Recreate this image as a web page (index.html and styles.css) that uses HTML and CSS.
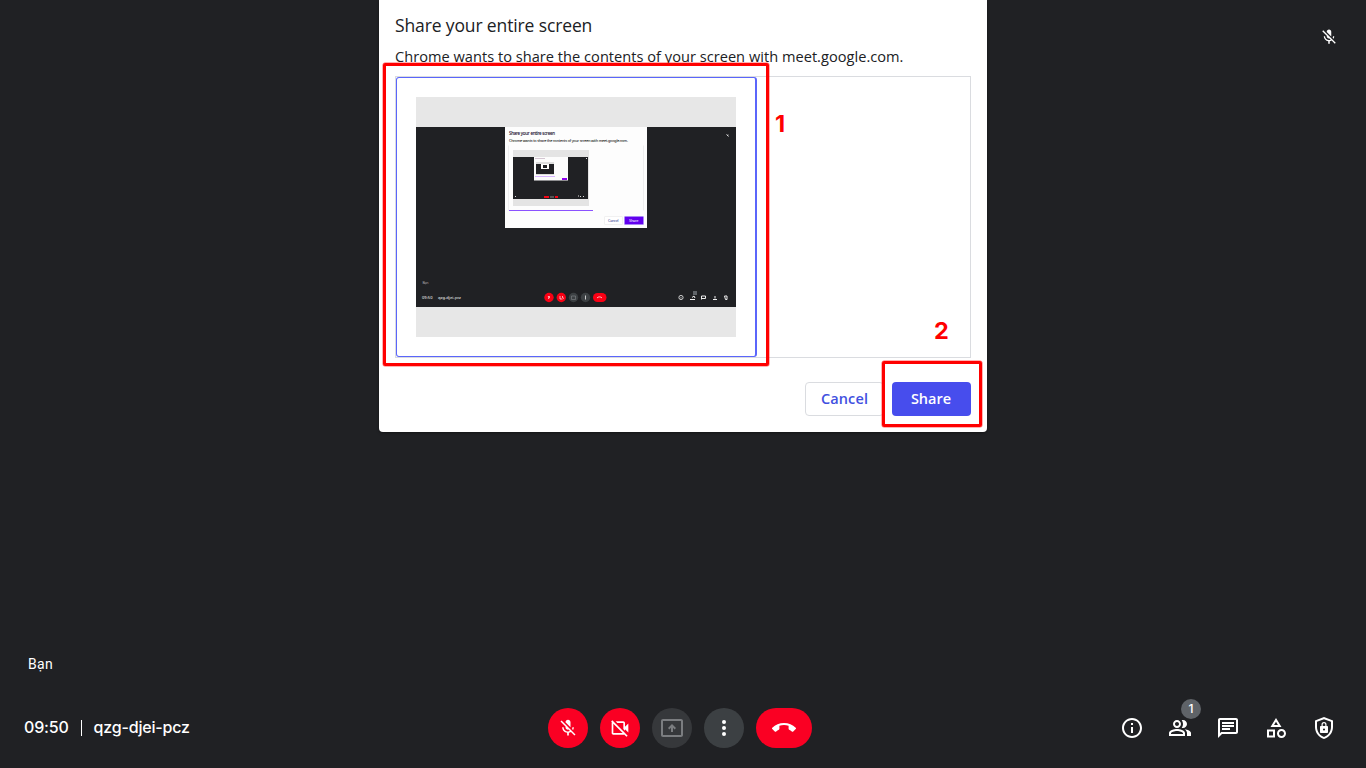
FILE: index.html
```html
<!DOCTYPE html>
<html lang="vi">
<head>
<meta charset="utf-8">
<title>Meet</title>
<link rel="stylesheet" href="styles.css">
</head>
<body>
<div class="meet">
  <svg class="tile-mic" viewBox="0 0 24 24"><path d="M19 11h-1.7c0 .74-.16 1.43-.43 2.05l1.23 1.23c.56-.98.9-2.09.9-3.28zm-4.02.17c0-.06.02-.11.02-.17V5c0-1.66-1.34-3-3-3S9 3.34 9 5v.18l5.98 5.99zM4.27 3L3 4.27l6.01 6.01V11c0 1.66 1.33 3 2.99 3 .22 0 .44-.03.65-.08l1.66 1.66c-.71.33-1.5.52-2.31.52-2.76 0-5.3-2.1-5.3-5.1H5c0 3.41 2.72 6.23 6 6.72V21h2v-3.28c.91-.13 1.77-.45 2.54-.9L19.73 21 21 19.73 4.27 3z"/></svg>

  <section class="dialog">
    <h1 class="title">Share your entire screen</h1>
    <p class="subtitle">Chrome wants to share the contents of your screen with meet.google.com.</p>
    <div class="sources">
      <div class="source">
        <svg class="thumb" viewBox="0 0 320 240">
          <rect width="320" height="240" fill="#e7e7e7"/>
          <rect y="30" width="320" height="180" fill="#202124"/>
          <rect x="89" y="30" width="142" height="101" fill="#fdfdfd"/>
          <text x="93" y="37.500" font-size="4.500" textLength="46" fill="#201030" stroke="#201030" stroke-width=".1">Share your entire screen</text>
          <text x="93" y="45" font-size="3.800" textLength="119" fill="#222" stroke="#222" stroke-width=".05">Chrome wants to share the contents of your screen with meet.google.com.</text>
          <path d="M92.500 48.500v65M227.500 48.500v65" fill="none" stroke="#eeeeef"/>
          <rect x="97" y="53" width="76" height="56" fill="#e4e4e4"/>
          <rect x="97" y="60" width="75" height="42" fill="#202124"/>
          <rect x="118" y="60" width="34" height="23.500" fill="#fcfcfc"/>
          <path d="M119 61.500h10" stroke="#c9b8c6" stroke-width=".8"/>
          <rect x="120" y="65" width="18" height="13" fill="#dedede"/>
          <rect x="120" y="67" width="18" height="10" fill="#202124"/>
          <rect x="125" y="67" width="8" height="5" fill="#fff"/>
          <rect x="127" y="68" width="4" height="3" fill="#202124"/>
          <rect x="119" y="79" width="20" height="1" fill="#d7b5ff"/>
          <rect x="146" y="81" width="5" height="2" fill="#9000f0"/>
          <path d="M128 100h5m6 0h3" stroke="#f20818" stroke-width="2"/>
          <path d="M134 100h4" stroke="#555" stroke-width="2"/>
          <path d="M99 99.500h1m62-.5h1m1 .5h1m2 0h1M170 61.500h1" stroke="#ddd"/>
          <rect x="93" y="113" width="84" height="1" fill="#8b52ff"/>
          <rect x="188.500" y="119.500" width="18" height="8" rx=".5" fill="#fff" stroke="#f1f1f1"/>
          <rect x="208.500" y="119.500" width="19" height="8" rx=".5" fill="#6200ee" stroke="#a58af8" stroke-width=".6"/>
          <text x="192" y="125" font-size="3.800" textLength="10.500" fill="#2a3590">Cancel</text>
          <text x="213" y="125" font-size="3.800" textLength="9.500" fill="#fff">Share</text>
          <path d="M310.500 37.500l2 2m-.5-2v1" stroke="#ddd"/>
          <text x="6.500" y="187" font-size="3.600" textLength="6" fill="#aaa">Bạn</text>
          <text x="6" y="202" font-size="4" textLength="10.500" fill="#fff">09:50</text>
          <text x="22" y="202" font-size="4" textLength="23" fill="#fff">qzg-djei-pcz</text>
          <circle cx="133" cy="200.500" r="4.700" fill="#fa0014"/><circle cx="145.300" cy="200.500" r="4.700" fill="#fa0014"/>
          <circle cx="157.500" cy="200.500" r="4.700" fill="#3c4043"/><circle cx="169.500" cy="200.500" r="4.700" fill="#3c4043"/>
          <rect x="177" y="196" width="13.500" height="9" rx="4.500" fill="#fa0014"/>
          <path d="M132 199l1.500 2m0-2l-1 3M144 199v3h2.500m0-3v1.500l1.500 1M181 201c1-1.500 4-1.500 5 0" fill="none" stroke="#fff" stroke-width=".7"/>
          <path d="M155.500 199h4v3.500h-4z" fill="none" stroke="#85878a" stroke-width=".6"/>
          <path d="M169.500 198.500v4" stroke="#ddd" stroke-width=".9"/>
          <circle cx="265" cy="200.500" r="2.100" fill="none" stroke="#ddd" stroke-width=".9"/><path d="M265 200v1.500" stroke="#ddd" stroke-width=".7"/>
          <rect x="277" y="194" width="4" height="4" fill="#5f6368"/>
          <path d="M274 202.500h5M276 200.500l2-1.500 1 2M285.500 202.500v-3.500h4v2.500h-3.500M297 202.500h4m-2-3.500v2.500M308.500 199h2.500v3.500h-1.500z" fill="none" stroke="#eee" stroke-width="1"/>
        </svg>
      </div>
    </div>
    <div class="actions">
      <button class="btn cancel">Cancel</button>
      <button class="btn share">Share</button>
    </div>
    <div class="mark mark-source"></div>
    <div class="mark mark-share"></div>
    <span class="number one">1</span>
    <span class="number two">2</span>
  </section>

  <div class="name">Bạn</div>

  <footer class="bar">
    <div class="info"><span class="time">09:50</span><span class="sep"></span><span class="code">qzg-djei-pcz</span></div>
    <div class="controls">
      <span class="ctl red"><svg class="i20" viewBox="0 0 24 24"><path d="M19 11h-1.700c0 .74-.16 1.430-.43 2.050l1.230 1.230c.56-.98.9-2.090.9-3.280zm-4.020.17c0-.06.02-.11.02-.17V5c0-1.660-1.340-3-3-3S9 3.340 9 5v.18l5.980 5.990zM4.270 3L3 4.270l6.010 6.010V11c0 1.660 1.330 3 2.990 3 .22 0 .44-.03.65-.08l1.660 1.660c-.71.33-1.500.52-2.310.52-2.760 0-5.300-2.100-5.300-5.100H5c0 3.410 2.720 6.230 6 6.720V21h2v-3.280c.91-.13 1.770-.45 2.540-.9L19.730 21 21 19.730 4.270 3z"/></svg></span>
      <span class="ctl red"><svg class="i20" viewBox="0 0 24 24"><path d="M18 10.480V6c0-1.100-.9-2-2-2H6.830l2 2H16v7.170l2 2v-1.650l4 3.980v-11l-4 3.980zM16 16L6 6 4 4 2.810 2.810 1.390 4.220l.85.85C2.090 5.350 2 5.660 2 6v12c0 1.100.9 2 2 2h12c.34 0 .65-.09.93-.24l2.850 2.850 1.410-1.410L18 18l-2-2zM4 18V6.830L15.170 18H4z"/></svg></span>
      <span class="ctl dim"><svg class="i24" viewBox="0 0 24 24"><path d="M21 3H3c-1.110 0-2 .89-2 2v14c0 1.110.89 2 2 2h18c1.110 0 2-.89 2-2V5c0-1.110-.89-2-2-2zm0 16H3V5h18v14zM11 16v-4.200l-1.600 1.600L8 12l4-4 4 4-1.400 1.400-1.600-1.600V16z"/></svg></span>
      <span class="ctl gray"><svg class="i24" viewBox="0 0 24 24"><circle cx="12" cy="6" r="2"/><circle cx="12" cy="12" r="2"/><circle cx="12" cy="18" r="2"/></svg></span>
      <span class="ctl red end"><svg class="i24" viewBox="0 0 24 24"><path d="M12 9c-1.600 0-3.150.25-4.600.72v3.100c0 .39-.23.74-.56.9-.98.49-1.870 1.120-2.660 1.850-.18.18-.43.28-.7.28-.28 0-.53-.11-.71-.29L.29 13.080c-.18-.17-.29-.42-.29-.7 0-.28.11-.53.29-.71C3.340 8.780 7.460 7 12 7s8.660 1.780 11.710 4.670c.18.18.29.43.29.71 0 .28-.11.53-.29.71l-2.480 2.480c-.18.18-.43.29-.71.29-.27 0-.52-.11-.7-.28-.79-.74-1.690-1.360-2.670-1.850-.33-.16-.56-.5-.56-.9v-3.100C15.150 9.250 13.600 9 12 9z"/></svg></span>
    </div>
    <div class="tools">
      <svg class="i24" viewBox="0 0 24 24"><path d="M11 7h2v2h-2zm0 4h2v6h-2zm1-9C6.480 2 2 6.480 2 12s4.480 10 10 10 10-4.480 10-10S17.520 2 12 2zm0 18c-4.410 0-8-3.590-8-8s3.590-8 8-8 8 3.590 8 8-3.590 8-8 8z"/></svg>
      <span class="people"><svg class="i24" viewBox="0 0 24 24"><path d="M16.670 13.130C18.040 14.060 19 15.320 19 17v3h4v-3c0-2.180-3.570-3.470-6.330-3.870zM15 12c2.210 0 4-1.790 4-4s-1.790-4-4-4c-.47 0-.91.1-1.330.24C14.500 5.270 15 6.580 15 8s-.5 2.730-1.330 3.760c.42.14.86.24 1.330.24zM9 12c2.210 0 4-1.790 4-4s-1.790-4-4-4-4 1.790-4 4 1.790 4 4 4zm0-6c1.100 0 2 .9 2 2s-.9 2-2 2-2-.9-2-2 .9-2 2-2zm0 7c-2.670 0-8 1.340-8 4v3h16v-3c0-2.660-5.330-4-8-4zm6 5H3v-.99C3.200 16.290 6.300 15 9 15s5.800 1.290 6 2v1z"/></svg><span class="badge">1</span></span>
      <svg class="i24" viewBox="0 0 24 24"><path d="M4 4h16v12H5.170L4 17.170V4m0-2c-1.100 0-1.990.9-1.990 2L2 22l4-4h14c1.100 0 2-.9 2-2V4c0-1.100-.9-2-2-2H4zm2 10h8v2H6v-2zm0-3h12v2H6V9zm0-3h12v2H6V6z"/></svg>
      <svg class="i24" viewBox="0 0 24 24"><path d="M12 2l-5.500 9h11L12 2zm0 3.840L13.930 9h-3.870L12 5.840zM17.500 13c-2.490 0-4.500 2.010-4.500 4.500s2.010 4.500 4.500 4.500 4.500-2.010 4.500-4.500-2.010-4.500-4.500-4.500zm0 7c-1.380 0-2.500-1.120-2.500-2.500s1.120-2.500 2.500-2.500 2.500 1.120 2.500 2.500-1.120 2.500-2.500 2.500zM3 21.500h8v-8H3v8zm2-6h4v4H5v-4z"/></svg>
      <svg class="i24" viewBox="0 0 24 24"><path fill-rule="evenodd" d="M12 1L3 4.400V11c0 5.550 3.840 10.740 9 12 5.160-1.260 9-6.450 9-12V4.400L12 1zm7 10c0 4.520-2.980 8.690-7 9.930-4.020-1.240-7-5.410-7-9.930V5.800l7-2.650 7 2.650V11z"/><path fill-rule="evenodd" d="M9 10h.5V8.500a2.500 2.500 0 0 1 5 0V10h.5c.55 0 1 .45 1 1v5c0 .55-.45 1-1 1H9c-.55 0-1-.45-1-1v-5c0-.55.45-1 1-1zm1.700 0h2.600V8.500a1.300 1.300 0 0 0-2.600 0V10zM12 12.400a1.100 1.100 0 1 0 0 2.200 1.100 1.100 0 0 0 0-2.200z"/></svg>
    </div>
  </footer>
</div>
</body>
</html>
```
FILE: styles.css
```css
* { box-sizing: border-box; }
body { margin: 0; background: #202124; font-family: "Open Sans", "Noto Sans", sans-serif; }
svg { display: block; fill: currentColor; }
.meet { position: relative; width: 1366px; height: 768px; overflow: hidden; display: flex; flex-direction: column; background: #202124; color: #fff; }
.tile-mic { position: absolute; left: 1320px; top: 28px; width: 18px; height: 18px; }

.dialog { position: relative; width: 608px; height: 432px; margin-left: 379px; padding: 0 16px; background: #fff; border-radius: 0 0 4px 4px; color: #202124; box-shadow: 0 1px 3px rgba(0,0,0,.4); }
.title { margin: 0; padding-top: 13px; height: 44px; font-size: 17.5px; line-height: 25px; font-weight: 400; letter-spacing: -.13px; white-space: nowrap; }
.subtitle { margin: 0; height: 32px; font-size: 14.6px; line-height: 24px; letter-spacing: .02px; white-space: nowrap; }
.sources { width: 576px; height: 282px; border: 1px solid #dadce0; }
.source { width: 361px; height: 280px; padding: 19px; border: 1px solid #5b66fb; border-right-width: 2px; border-radius: 3px; }
.thumb { width: 320px; height: 240px; font-family: "Noto Sans", sans-serif; }
.actions { display: flex; justify-content: flex-end; gap: 8px; padding-top: 24px; }
.btn { width: 79px; height: 34px; padding: 0 1px 1px 0; border-radius: 4px; font: 600 14.5px "Open Sans", sans-serif; }
.cancel { padding-right: 0; background: #fff; border: 1px solid #dadce0; color: #4150e0; letter-spacing: .12px; }
.share { background: #474ded; border: 0; color: #fff; }
.mark { position: absolute; border: 3px solid #f00; border-radius: 2px; box-shadow: 0 0 0 .5px rgba(255,0,0,.6); }
.mark-source { left: 4px; top: 63px; width: 386px; height: 303px; }
.mark-share { left: 503px; top: 361px; width: 100px; height: 66px; }
.number { position: absolute; color: #f00; font: 700 23.5px/28px Inter, sans-serif; }
.one { left: 396px; top: 110px; }
.two { left: 555px; top: 317px; }

.name { margin-top: 222px; padding-left: 28px; height: 34px; font: 400 14px/20px Roboto, sans-serif; letter-spacing: .3px; }
.bar { display: grid; grid-template-columns: 1fr 264px 1fr; height: 80px; align-items: center; padding: 0 30px 0 24px; }
.info { display: flex; align-items: center; padding-bottom: 2px; font: 500 16px/24px Inter, sans-serif; letter-spacing: -.18px; }
.sep { width: 1px; height: 16px; margin: 2px 12px 0; background: #fff; }
.controls { display: flex; gap: 12px; margin-right: -3px; }
.ctl { display: flex; align-items: center; justify-content: center; width: 40px; height: 40px; border-radius: 20px; flex: none; }
.end { width: 56px; }
.red { background: #fa0023; }
.gray { background: #3c4043; }
.dim { background: #36383b; color: #7b7d80; }
.i20 { width: 20px; height: 20px; }
.i24 { width: 24px; height: 24px; }
.tools { display: flex; justify-content: flex-end; gap: 24px; }
.people { position: relative; }
.badge { position: absolute; left: 13px; top: -17px; width: 20px; height: 20px; border-radius: 50%; background: #5f6368; font: 500 12px/20px Inter, sans-serif; text-align: center; }
```
